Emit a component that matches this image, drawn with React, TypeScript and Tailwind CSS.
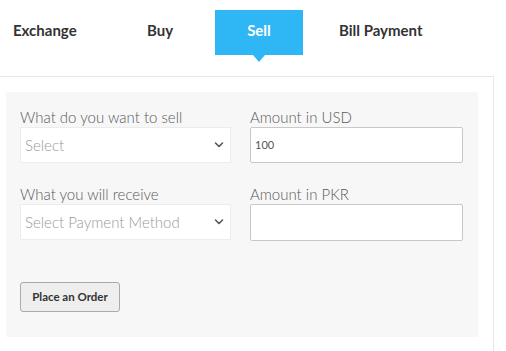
import React from "react";

const Chevron = () => (
  <svg width="10" height="7" viewBox="0 0 10 7" className="absolute right-[6px] top-1/2 -translate-y-1/2">
    <path d="M1.5 1.5 L5 5 L8.5 1.5" fill="none" stroke="#555" strokeWidth="1.6" strokeLinecap="round" strokeLinejoin="round" />
  </svg>
);

export default function App() {
  const font = { fontFamily: "Lato, 'Open Sans', sans-serif" };
  return (
    <div className="w-[506px] h-[351px] bg-white overflow-hidden relative" style={font}>
      {/* Tabs */}
      <div className="flex h-[76px] pt-[10px] text-[15px] font-bold text-[#333]">
        <div className="w-[13px]" />
        <div className="w-[134px] h-[45px] flex items-center pb-[5px]">Exchange</div>
        <div className="w-[68px] h-[45px] flex items-center pb-[5px]">Buy</div>
        <div className="relative w-[88px] h-[45px] bg-[#2fb7f5] text-white flex items-center justify-center pb-[5px]">
          Sell
          <div className="absolute left-1/2 -translate-x-1/2 top-full w-0 h-0 border-l-[6px] border-r-[6px] border-t-[7px] border-l-transparent border-r-transparent border-t-[#2fb7f5]" />
        </div>
        <div className="w-[36px]" />
        <div className="h-[45px] flex items-center pb-[5px]">Bill Payment</div>
      </div>
      {/* Panel */}
      <div className="w-[494px] h-[300px] border-t border-r border-[#e8e8e8] pt-[15px] pl-[6px]">
        <div className="w-[472px] h-[245px] bg-[#f7f7f7] pt-[15px] pl-[14px]">
          <div className="flex gap-[19px]">
            <div className="w-[211px]">
              <div className="text-[15px] text-[#5a5a5a] font-light leading-[20px] h-[20px] whitespace-nowrap">What do you want to sell</div>
              <div className="relative h-[36px] bg-white border border-[#ececec] flex items-center pl-[4px] text-[15px] text-[#999] font-light">
                Select
                <Chevron />
              </div>
            </div>
            <div className="w-[213px]">
              <div className="text-[15px] text-[#5a5a5a] font-light leading-[20px] h-[20px]">Amount in USD</div>
              <div className="h-[36px] bg-white border border-[#c8c8c8] rounded-[2px] flex items-center pl-[4px] text-[11px] text-[#555]">100</div>
            </div>
          </div>
          <div className="flex gap-[19px] mt-[21px]">
            <div className="w-[211px]">
              <div className="text-[15px] text-[#5a5a5a] font-light leading-[20px] h-[20px]">What you will receive</div>
              <div className="relative h-[36px] bg-white border border-[#ececec] flex items-center pl-[4px] text-[15px] text-[#999] font-light">
                Select Payment Method
                <Chevron />
              </div>
            </div>
            <div className="w-[213px]">
              <div className="text-[15px] text-[#5a5a5a] font-light leading-[20px] h-[20px]">Amount in PKR</div>
              <div className="h-[37px] bg-white border border-[#c8c8c8] rounded-[2px]" />
            </div>
          </div>
          <button className="mt-[41px] w-[100px] h-[30px] bg-[#eeeeee] border border-[#aaa] rounded-[3px] text-[11.5px] font-bold text-[#333] flex items-center justify-center">
            Place an Order
          </button>
        </div>
      </div>
    </div>
  );
}
